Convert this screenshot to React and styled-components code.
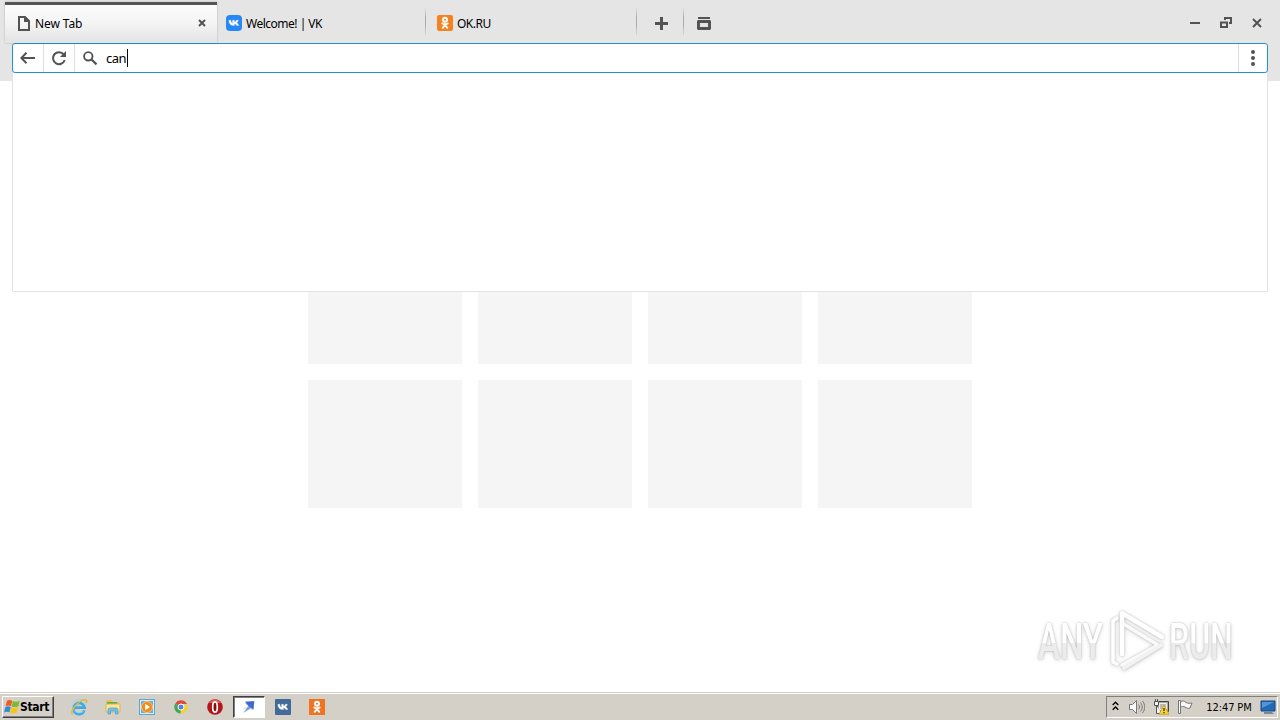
import React from 'react';
import styled, { createGlobalStyle } from 'styled-components';

const UI_FONT = `'Noto Sans', 'Open Sans', sans-serif`;
const TASKBAR_FONT = `'DejaVu Sans Condensed', 'DejaVu Sans', sans-serif`;
const ICON_COLOR = '#535353';
const ACCENT = '#2590d8';

const GlobalStyle = createGlobalStyle`
    * {
        box-sizing: border-box;
    }

    body {
        background: #fff;
        margin: 0;
        overflow: hidden;
    }

    svg {
        display: block;
        flex: none;
    }
`;

const Screen = styled.div`
    color: #000;
    display: flex;
    flex-direction: column;
    font-family: ${UI_FONT};
    font-size: 12px;
    height: 720px;
    position: relative;
    width: 1280px;
`;

const Header = styled.header`
    background: #e5e5e5;
    flex: none;
    height: 81px;
    position: relative;
    z-index: 1;
`;

const TabStrip = styled.div`
    display: flex;
    height: 43px;
    padding: 2px 0 0 5px;
`;

const Tab = styled.div`
    align-items: center;
    background: ${({ $active }) =>
        $active ? 'linear-gradient(#fbfbfb, #f5f5f5 45%, #e5e5e5 95%)' : 'none'};
    border-top: 3px solid ${({ $active }) => ($active ? '#555' : 'transparent')};
    display: flex;
    padding: 0 11px 2px ${({ $indent }) => $indent}px;
    width: ${({ $width }) => $width}px;
    ${({ $active }) => $active && 'box-shadow: 0 0 2px rgba(0, 0, 0, 0.22);'}
`;

const TabTitle = styled.span`
    flex: 1;
    letter-spacing: ${({ $spacing }) => $spacing || 0}px;
    line-height: 16px;
    margin-left: 4px;
    padding-top: 1px;
    white-space: nowrap;
`;

const Separator = styled.div`
    background: linear-gradient(transparent, #aaa 35%, #aaa 60%, transparent);
    height: 30px;
    margin-top: 5px;
    width: 1px;
`;

const StripButton = styled.div`
    align-items: center;
    display: flex;
    height: 41px;
    justify-content: center;
    padding: 1px 0 0 ${({ $shift }) => $shift || 0}px;
    width: ${({ $width }) => $width}px;
`;

const WindowControls = styled.div`
    align-items: center;
    display: flex;
    gap: 20px;
    height: 41px;
    margin-left: auto;
    padding-right: 18px;
`;

const AddressBar = styled.div`
    background: #fff;
    border: 1px solid ${ACCENT};
    border-radius: 3px;
    display: flex;
    height: 30px;
    margin: 0 12px;
    overflow: hidden;
`;

const BarButton = styled.div`
    align-items: center;
    border-${({ $edge }) => $edge || 'right'}: 1px solid #ddd;
    display: flex;
    justify-content: center;
    width: ${({ $width }) => $width}px;
`;

const Query = styled.div`
    align-items: center;
    display: flex;
    flex: 1;
    font-size: 13px;
    letter-spacing: -0.5px;
    padding-left: 7px;
`;

const QueryText = styled.span`
    margin-left: 8px;
`;

const Caret = styled.span`
    background: #000;
    height: 18px;
    margin-left: 1px;
    width: 1px;
`;

const Suggestions = styled.div`
    background: #fff;
    border: 1px solid #e3e3e3;
    border-radius: 0 0 2px 2px;
    border-top: 0;
    height: 219px;
    left: 12px;
    position: absolute;
    right: 12px;
    top: 73px;
`;

const Page = styled.main`
    flex: 1;
    padding-top: 155px;
`;

const SpeedDial = styled.div`
    display: grid;
    gap: 16px;
    grid-template: repeat(2, 128px) / repeat(4, 154px);
    justify-content: center;
`;

const Tile = styled.div`
    background: #f5f5f5;
`;

const Watermark = styled.div`
    align-items: center;
    display: flex;
    filter: drop-shadow(0 0 1px rgba(0, 0, 0, 0.2)) drop-shadow(0 1px 2px rgba(0, 0, 0, 0.16));
    height: 64px;
    left: 1038px;
    position: absolute;
    top: 608px;
`;

const WordmarkSlot = styled.div`
    padding-top: 4px;
    width: ${({ $width }) => $width}px;
`;

const WordmarkText = styled.span`
    background: linear-gradient(#fff 52%, #ececec 52%);
    background-clip: text;
    color: transparent;
    display: inline-block;
    font: 500 50px/58px Roboto, sans-serif;
    transform: scaleX(${({ $scale }) => $scale});
    transform-origin: left;
    white-space: nowrap;
`;

const Wordmark = ({ width, scale, children }) => (
    <WordmarkSlot $width={width}>
        <WordmarkText $scale={scale}>{children}</WordmarkText>
    </WordmarkSlot>
);

const Taskbar = styled.footer`
    align-items: flex-start;
    background: #d4d0c8;
    border-top: 1px solid #d4d0c8;
    box-shadow: inset 0 1px #fff;
    display: flex;
    flex: none;
    font-family: ${TASKBAR_FONT};
    height: 28px;
    padding: 3px 2px 0;
`;

const StartButton = styled.div`
    align-items: center;
    border: 1px solid;
    border-color: #fff #404040 #404040 #fff;
    box-shadow: inset -1px -1px #808080;
    display: flex;
    font-size: 12px;
    font-weight: bold;
    height: 22px;
    letter-spacing: -0.35px;
    padding: 0 2px 0 1px;
    width: 52px;
`;

const QuickLaunch = styled.div`
    display: flex;
    gap: 2px;
    margin-left: 9px;
`;

const TaskItem = styled.div`
    align-items: center;
    background: ${({ $active }) => ($active ? '#fff' : 'none')};
    border: 1px solid transparent;
    ${({ $active }) =>
        $active && 'border-color: #404040 #fff #fff #404040; box-shadow: inset 1px 1px #808080;'}
    display: flex;
    height: 22px;
    justify-content: center;
    width: 32px;
`;

const Tray = styled.div`
    align-items: center;
    border: 1px solid;
    border-color: #808080 #fff #fff #808080;
    display: flex;
    font-size: 11px;
    height: 22px;
    margin-left: auto;
    padding: 0 1px 0 5px;
    width: 172px;
`;

const TrayIcons = styled.div`
    display: flex;
    gap: 8px;
    margin-left: 10px;
`;

const Clock = styled.span`
    letter-spacing: -0.1px;
    margin: 0 auto;
    padding-left: 5px;
    white-space: nowrap;
`;

const Icon = ({ size = 16, width = size, height = size, children, ...otherProps }) => (
    <svg width={width} height={height} viewBox={`0 0 ${width} ${height}`} fill="none" {...otherProps}>
        {children}
    </svg>
);

const PageIcon = () => (
    <Icon width={14} height={16} stroke={ICON_COLOR} strokeWidth="2">
        <path d="M2 2h6l4 4v9H2z" />
        <path d="M7 1v6h6L7 1z" fill={ICON_COLOR} stroke="none" />
    </Icon>
);

const VK_PATH =
    'M2.8 5.2h2c.2 1.8 1 3 1.8 3.2v-3.2h1.8v2c.9-.2 1.6-1 2-2h2c-.3 1.2-1.1 2.1-1.8 2.6.9.4 1.7 1.2 2.2 2.8h-2.1c-.4-1-1.2-1.7-2.3-1.8v1.8h-.6C4.7 10.6 2.9 8.7 2.8 5.2z';

const VkIcon = ({ color, radius }) => (
    <Icon>
        <rect width="16" height="16" rx={radius} fill={color} />
        <path d={VK_PATH} fill="#fff" stroke="#fff" strokeWidth=".3" />
    </Icon>
);

const OkIcon = ({ radius = 0, color = '#f58220' }) => (
    <Icon stroke="#fff" strokeWidth="1.9" strokeLinecap="round">
        <rect width="16" height="16" rx={radius} fill={color} stroke="none" />
        <circle cx="8" cy="4.8" r="2" />
        <path d="M5.3 8.5c1.7 1 3.7 1 5.4 0M8 9.4v1M8 10.2l-2.3 2.6M8 10.2l2.3 2.6" />
    </Icon>
);

const CloseIcon = ({ size, weight }) => (
    <Icon size={size} stroke={ICON_COLOR} strokeWidth={weight}>
        <path d={`M1 1L${size - 1} ${size - 1}M${size - 1} 1L1 ${size - 1}`} />
    </Icon>
);

const PlusIcon = () => (
    <Icon size={13} stroke={ICON_COLOR} strokeWidth="3">
        <path d="M6.5 0v13M0 6.5h13" />
    </Icon>
);

const TabMenuIcon = () => (
    <Icon width={14} height={13} fill={ICON_COLOR}>
        <path d="M1 0h12v2H1z" />
        <path fillRule="evenodd" d="M1 3h12l1 1v8l-1 1H1l-1-1V4zM3 6v4h8V6z" />
        <path d="M4 7h6v2H4z" fill="#e5e5e5" />
    </Icon>
);

const RestoreIcon = () => (
    <Icon width={12} height={12} stroke={ICON_COLOR} strokeWidth="2">
        <path d="M1 5.5h6V10H1z" />
        <path d="M5 3V1h6v5H9" />
    </Icon>
);

const BackIcon = () => (
    <Icon stroke={ICON_COLOR} strokeWidth="2">
        <path d="M15 8H1.5M6.5 2.8L1.3 8l5.2 5.2" />
    </Icon>
);

const ReloadIcon = () => (
    <Icon stroke={ICON_COLOR} strokeWidth="2">
        <path d="M12.7 4.4A6 6 0 1 0 13.7 10" />
        <path d="M15 1v6H9z" fill={ICON_COLOR} stroke="none" />
    </Icon>
);

const SearchIcon = () => (
    <Icon stroke={ICON_COLOR} strokeWidth="1.9">
        <circle cx="6.3" cy="6.3" r="4.2" />
        <path d="M9.5 9.5l5 4.9" strokeWidth="2.2" />
    </Icon>
);

const MenuIcon = () => (
    <Icon width={4} height={16} fill={ICON_COLOR}>
        <circle cx="2" cy="2" r="2" />
        <circle cx="2" cy="8" r="2" />
        <circle cx="2" cy="14" r="2" />
    </Icon>
);

const PlayLogo = () => (
    <Icon width={65} height={64} stroke="#fff" strokeLinejoin="round" strokeLinecap="round">
        <path d="M18 46V5l40 24" strokeWidth="4.5" />
        <path d="M18 15l36 22-36 20" strokeWidth="3.5" stroke="#fafafa" />
        <path d="M13 10l-4 3v41l4 2" strokeWidth="3.5" />
        <path d="M20 60l37-23" stroke="#f2f2f2" strokeWidth="4" />
    </Icon>
);

const WindowsIcon = () => (
    <Icon>
        <path d="M3 1.7c2-1.3 3.6-.7 5.2 0L7 7.1c-1.7-.9-3.5-.9-5.4 0z" fill="#ee5a24" />
        <path d="M8.8 2.1c2 1 4.5 1 7-.3l-1.4 5.4c-2.4 1.2-4.8 1.1-6.8.2z" fill="#7dba32" />
        <path d="M1.4 7.9c1.7-.9 3.5-.9 5.4 0l-1.4 5.4c-1.8-.9-3.6-.8-5.3.1z" fill="#318bd5" />
        <path d="M7.4 8.3c2 .9 4.4.9 6.8-.2l-1.4 5.3c-2.4 1.2-4.7 1.2-6.7.2z" fill="#f9c514" />
    </Icon>
);

const ExplorerIcon = () => (
    <Icon width={18} height={18}>
        <path d="M14.4 12.4A5.6 5.6 0 1 1 14.6 9.6H5" stroke="#3fa9e3" strokeWidth="2.7" />
        <path d="M13.5 13.5A6.8 6.8 0 1 1 16 9" stroke="#8bd5f5" strokeWidth=".8" />
        <path d="M2.5 16.5C-.5 13 8 3 14.5 1.8c2-.3 2.8 1 1.8 3.1" stroke="#dfb83e" strokeWidth="1.4" />
    </Icon>
);

const FolderIcon = () => (
    <Icon>
        <path d="M1 2l1-1h5l1 2h6v9H1z" fill="#e5c25b" />
        <path d="M2 3h10v2H2z" fill="#58ad55" />
        <path d="M1 5h14v8H1z" fill="#f9e69b" stroke="#d9b954" />
        <path d="M3 15v-4Q3 9 5 9h6q2 0 2 2v4h-2.5v-3h-5v3z" fill="#77bee6" stroke="#4d9dcb" strokeWidth=".7" />
    </Icon>
);

const MediaIcon = () => (
    <Icon>
        <rect x=".5" y=".5" width="15" height="15" fill="#d6ecf8" stroke="#5ca7d5" />
        <rect x="2" y="2" width="12" height="12" fill="#5cb3e0" />
        <circle cx="8" cy="8" r="5.5" fill="#f28a16" stroke="#ffc46d" />
        <path d="M6.2 4.8v6.4L11 8z" fill="#fff" />
    </Icon>
);

const ChromeIcon = () => (
    <Icon>
        <path d="M8 8L2.2 4.6A6.7 6.7 0 0 1 14 5H8z" fill="#df4937" />
        <path d="M8 8l6-3a6.7 6.7 0 0 1-6.6 9.7z" fill="#f9cf32" />
        <path d="M8 8l-.6 6.7A6.7 6.7 0 0 1 2.2 4.6z" fill="#44a854" />
        <circle cx="8" cy="8" r="3" fill="#4d86df" stroke="#fff" />
    </Icon>
);

const OperaIcon = () => (
    <Icon>
        <circle cx="8" cy="8" r="7.8" fill="#b31518" />
        <path d="M2 4a7 7 0 0 1 12 0z" fill="#dc6057" />
        <ellipse cx="8" cy="8" rx="2.3" ry="5.2" fill="#8b0c0e" stroke="#fff" strokeWidth="1.7" />
    </Icon>
);

const PlaneIcon = () => (
    <Icon>
        <path d="M1 14.5l4-4.5-3-1 5-1 4-3 1 6-3-1z" fill="#ccd8f3" />
        <path d="M4 2.5l9.5-.5-1 9-2.6-2L3 13.5 7.5 7 5 5z" fill="#7897e2" />
        <path d="M5 3l8-.6-5 5.1zM8.5 7.5L13 2.4l-.8 7.7z" fill="#3d66c9" />
    </Icon>
);

const TrayArrowIcon = () => (
    <Icon width={7} height={12} stroke="#000" strokeWidth="1.4">
        <path d="M.7 4L3.5 1.2 6.3 4M.7 8.8L3.5 6l2.8 2.8" />
    </Icon>
);

const SpeakerIcon = () => (
    <Icon stroke="#777">
        <path d="M.5 5.5h3l4-4v13l-4-4h-3z" fill="#fafafa" />
        <path d="M9.5 5.5c1.3 1.5 1.3 3.5 0 5M11.5 3.5c2.3 3 2.3 6 0 9M13.5 2c3 4 3 8 0 12" />
    </Icon>
);

const NetworkIcon = () => (
    <Icon>
        <path d="M4.5 2.5h11v10h-11z" fill="#aaa" stroke="#444" />
        <path d="M6.5 4.5h7v6h-7z" fill="#bbb" stroke="#eee" />
        <path d="M1.5 2.5h4v4h-4zM3.5 6.5v8h5M2.5 2.5V0M4.5 2.5V0" fill="#f3f3f3" stroke="#555" />
        <path d="M11 6l5 9.3H6z" fill="#f9d532" stroke="#c79810" strokeWidth=".7" />
        <path d="M11 9v3M11 13v1.2" stroke="#222" strokeWidth="1.2" />
    </Icon>
);

const FlagIcon = () => (
    <Icon stroke="#777">
        <path d="M1.5 1.5h2v13h-2z" fill="#fafafa" />
        <path d="M3.5 2.5c2-1 4-.5 5.5 1 2 1 4 1 6 .5l-2 5c-2 .6-3.5.2-5-1-1.5-.8-3-.8-4.5 0z" fill="#fafafa" />
    </Icon>
);

const DesktopIcon = () => (
    <Icon>
        <path d="M1 2h14v10H1z" fill="#2469b8" stroke="#174780" />
        <path d="M2 3h12L2 9z" fill="#5195d7" />
        <path d="M4 13h8l2 2H4z" fill="#77879b" />
    </Icon>
);

const QUICK_ITEMS = [
    { name: 'explorer', icon: <ExplorerIcon /> },
    { name: 'files', icon: <FolderIcon /> },
    { name: 'media', icon: <MediaIcon /> },
    { name: 'chrome', icon: <ChromeIcon /> },
    { name: 'opera', icon: <OperaIcon /> },
    { name: 'plane', icon: <PlaneIcon />, active: true },
    { name: 'vk', icon: <VkIcon color="#426b98" radius={1} /> },
    { name: 'ok', icon: <OkIcon color="#ef7420" /> },
];

const App = () => (
    <Screen>
        <GlobalStyle />
        <Header>
            <TabStrip>
                <Tab $active $width={212} $indent={12}>
                    <PageIcon />
                    <TabTitle $spacing={-0.1}>New Tab</TabTitle>
                    <CloseIcon size={8} weight={2} />
                </Tab>
                <Tab $width={208} $indent={9}>
                    <VkIcon color="#2787f5" radius={4} />
                    <TabTitle $spacing={-0.5}>Welcome! | VK</TabTitle>
                </Tab>
                <Separator />
                <Tab $width={210} $indent={11}>
                    <OkIcon radius={2} />
                    <TabTitle $spacing={-0.5}>OK.RU</TabTitle>
                </Tab>
                <Separator />
                <StripButton $width={46} $shift={3}>
                    <PlusIcon />
                </StripButton>
                <Separator />
                <StripButton $width={40}>
                    <TabMenuIcon />
                </StripButton>
                <WindowControls>
                    <Icon width={10} height={2}>
                        <path d="M0 0h10v2H0z" fill={ICON_COLOR} />
                    </Icon>
                    <RestoreIcon />
                    <CloseIcon size={10} weight={2} />
                </WindowControls>
            </TabStrip>
            <AddressBar>
                <BarButton $width={31}>
                    <BackIcon />
                </BarButton>
                <BarButton $width={31}>
                    <ReloadIcon />
                </BarButton>
                <Query>
                    <SearchIcon />
                    <QueryText>can</QueryText>
                    <Caret />
                </Query>
                <BarButton $edge="left" $width={29}>
                    <MenuIcon />
                </BarButton>
            </AddressBar>
            <Suggestions />
        </Header>
        <Page>
            <SpeedDial>
                {Array.from({ length: 8 }, (_, index) => (
                    <Tile key={index} />
                ))}
            </SpeedDial>
        </Page>
        <Watermark>
            <Wordmark width={66} scale={0.66}>
                ANY
            </Wordmark>
            <PlayLogo />
            <Wordmark width={64} scale={0.64}>
                RUN
            </Wordmark>
        </Watermark>
        <Taskbar>
            <StartButton>
                <WindowsIcon />
                Start
            </StartButton>
            <QuickLaunch>
                {QUICK_ITEMS.map(({ name, icon, active }) => (
                    <TaskItem key={name} $active={active}>
                        {icon}
                    </TaskItem>
                ))}
            </QuickLaunch>
            <Tray>
                <TrayArrowIcon />
                <TrayIcons>
                    <SpeakerIcon />
                    <NetworkIcon />
                    <FlagIcon />
                </TrayIcons>
                <Clock>12:47 PM</Clock>
                <DesktopIcon />
            </Tray>
        </Taskbar>
    </Screen>
);

export default App;
